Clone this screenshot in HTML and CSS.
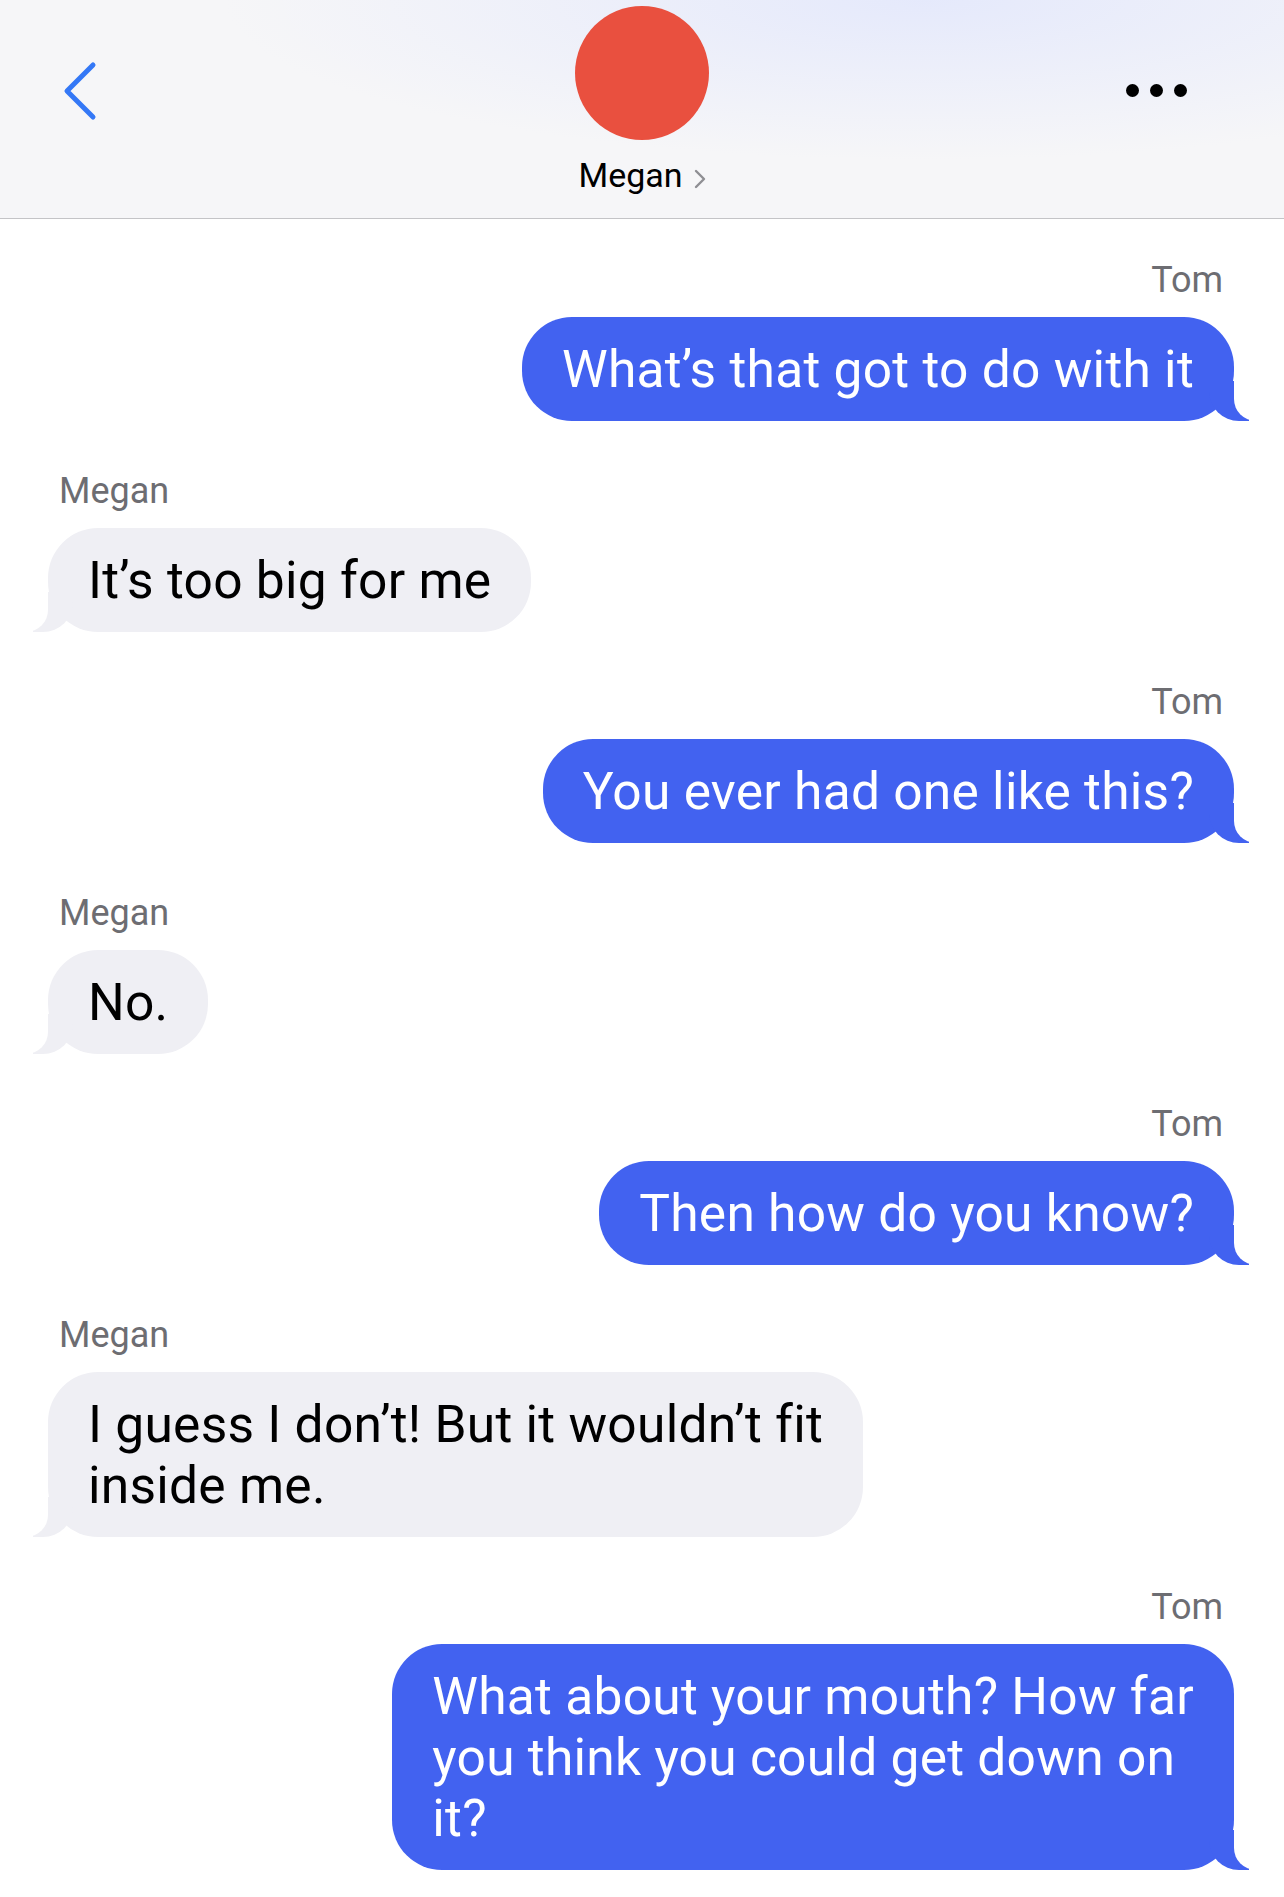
FILE: index.html
```html
<!DOCTYPE html>
<html lang="en">
<head>
<meta charset="utf-8">
<title>Megan</title>
<link rel="stylesheet" href="styles.css">
</head>
<body>
<header class="nav">
  <div class="nav-left">
    <svg class="back" width="38" height="64" viewBox="0 0 38 64" aria-hidden="true">
      <polyline points="33,7 7,33 33,59" fill="none" stroke="#3478f6" stroke-width="5" stroke-linecap="round" stroke-linejoin="round"/>
    </svg>
  </div>
  <div class="contact">
    <div class="avatar"></div>
    <div class="name">
      <span>Megan</span>
      <svg class="chev" width="12" height="20" viewBox="0 0 12 20" aria-hidden="true">
        <polyline points="2,2 10,10 2,18" fill="none" stroke="#8e8e93" stroke-width="2.4" stroke-linecap="round" stroke-linejoin="round"/>
      </svg>
    </div>
  </div>
  <div class="nav-right">
    <span class="dot"></span><span class="dot"></span><span class="dot"></span>
  </div>
</header>

<main class="thread">
  <div class="msg sent">
    <div class="sender">Tom</div>
    <div class="bubble">What’s that got to do with it</div>
  </div>
  <div class="msg received">
    <div class="sender">Megan</div>
    <div class="bubble">It’s too big for me</div>
  </div>
  <div class="msg sent">
    <div class="sender">Tom</div>
    <div class="bubble">You ever had one like this?</div>
  </div>
  <div class="msg received">
    <div class="sender">Megan</div>
    <div class="bubble">No.</div>
  </div>
  <div class="msg sent">
    <div class="sender">Tom</div>
    <div class="bubble">Then how do you know?</div>
  </div>
  <div class="msg received">
    <div class="sender">Megan</div>
    <div class="bubble">I guess I don’t! But it wouldn’t fit<br>inside me.</div>
  </div>
  <div class="msg sent">
    <div class="sender">Tom</div>
    <div class="bubble">What about your mouth? How far<br>you think you could get down on<br>it?</div>
  </div>
</main>
</body>
</html>
```

FILE: styles.css
```css
* {
  box-sizing: border-box;
}

html, body {
  margin: 0;
  padding: 0;
  background: #ffffff;
}

body {
  font-family: Roboto, "Liberation Sans", Arial, sans-serif;
  color: #000000;
  width: 1284px;
  min-height: 1897px;
  overflow: hidden;
}

/* ---------- Navigation header ---------- */
.nav {
  height: 219px;
  display: grid;
  grid-template-columns: 1fr auto 1fr;
  align-items: start;
  background:
    radial-gradient(ellipse 700px 160px at 72% 0%, rgba(226, 231, 252, 0.85), rgba(246, 246, 248, 0) 100%),
    #f6f6f8;
  border-bottom: 1px solid #c4c4c7;
}

.nav-left {
  padding-left: 60px;
  padding-top: 58px;
}

.back {
  display: block;
}

.contact {
  display: flex;
  flex-direction: column;
  align-items: center;
  padding-top: 6px;
}

.avatar {
  width: 134px;
  height: 134px;
  border-radius: 50%;
  background: #e9503f;
}

.name {
  margin-top: 17px;
  display: flex;
  align-items: center;
  font-size: 34px;
  line-height: 36px;
  color: #000000;
}

.chev {
  display: block;
  margin-left: 11px;
  margin-top: 7px;
}

.nav-right {
  display: flex;
  justify-content: flex-end;
  gap: 11px;
  padding-right: 97px;
  padding-top: 84px;
}

.dot {
  width: 13px;
  height: 13px;
  border-radius: 50%;
  background: #000000;
}

/* ---------- Message thread ---------- */
.thread {
  padding: 41px 50px 0 48px;
}

.msg {
  display: flex;
  flex-direction: column;
  margin-bottom: 50px;
}

.msg:last-child {
  margin-bottom: 0;
}

.sent {
  align-items: flex-end;
}

.received {
  align-items: flex-start;
}

.sender {
  font-size: 36px;
  line-height: 40px;
  color: #6d6d72;
  margin: 0 11px 17px;
}

.bubble {
  position: relative;
  z-index: 0;
  font-size: 51.5px;
  line-height: 61px;
  letter-spacing: 0.25px;
  padding: 22px 40px 21px;
  border-radius: 50px;
  white-space: nowrap;
}

.sent .bubble {
  background: #4262f0;
  color: #ffffff;
}

.received .bubble {
  background: #efeff4;
  color: #000000;
}

/* Bubble tails */
.bubble::before,
.bubble::after {
  content: "";
  position: absolute;
  bottom: 0;
  height: 40px;
}

.sent .bubble::before {
  right: -15px;
  width: 40px;
  background: #4262f0;
  border-bottom-left-radius: 30px;
}

.sent .bubble::after {
  right: -26px;
  width: 26px;
  background: #ffffff;
  border-bottom-left-radius: 22px;
}

.received .bubble::before {
  left: -15px;
  width: 40px;
  background: #efeff4;
  border-bottom-right-radius: 30px;
}

.received .bubble::after {
  left: -26px;
  width: 26px;
  background: #ffffff;
  border-bottom-right-radius: 22px;
}
```
